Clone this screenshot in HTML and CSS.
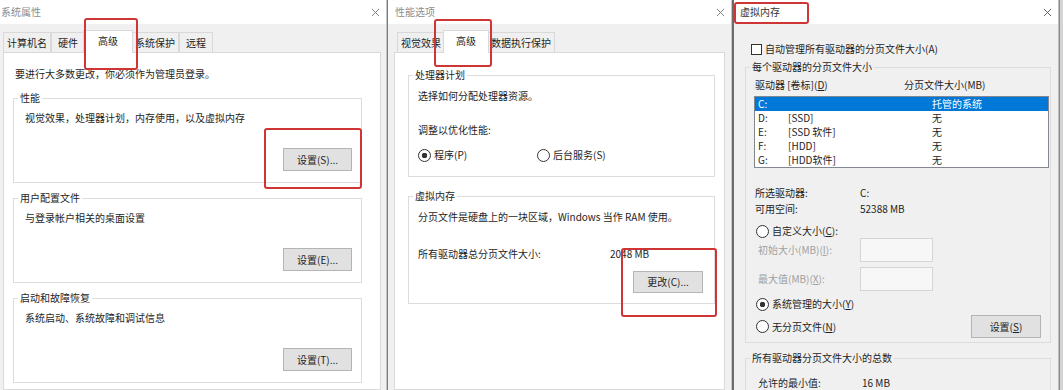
FILE: index.html
```html
<!DOCTYPE html>
<html>
<head>
	<meta charset="utf-8">
	<title>虚拟内存设置</title>
	<link rel="stylesheet" href="styles.css">
</head>
<body>
<div class="screen">

	<!-- 系统属性 -->
	<div class="dlg dlg-sys">
		<div class="titlebar">
			<span class="title">系统属性</span>
			<svg class="close" viewBox="0 0 10 10"><path d="M1 1L9 9M9 1L1 9" stroke="#777" stroke-width="1" fill="none"/></svg>
		</div>
		<div class="tabs tabs-sys">
			<span class="tab">计算机名</span>
			<span class="tab">硬件</span>
			<span class="tab on">高级</span>
			<span class="tab">系统保护</span>
			<span class="tab">远程</span>
		</div>
		<div class="page">
			<p class="note">要进行大多数更改，你必须作为管理员登录。</p>
			<fieldset class="group">
				<legend>性能</legend>
				<div class="group-in">
					<p>视觉效果，处理器计划，内存使用，以及虚拟内存</p>
					<div class="btn-row"><span class="btn">设置(S)...</span></div>
				</div>
			</fieldset>
			<fieldset class="group">
				<legend>用户配置文件</legend>
				<div class="group-in">
					<p>与登录帐户相关的桌面设置</p>
					<div class="btn-row"><span class="btn">设置(E)...</span></div>
				</div>
			</fieldset>
			<fieldset class="group">
				<legend>启动和故障恢复</legend>
				<div class="group-in">
					<p>系统启动、系统故障和调试信息</p>
					<div class="btn-row"><span class="btn">设置(T)...</span></div>
				</div>
			</fieldset>
		</div>
		<div class="mark mark-tab1"></div>
		<div class="mark mark-btn1"></div>
	</div>

	<!-- 性能选项 -->
	<div class="dlg dlg-perf">
		<div class="titlebar">
			<span class="title">性能选项</span>
			<svg class="close" viewBox="0 0 10 10"><path d="M1 1L9 9M9 1L1 9" stroke="#777" stroke-width="1" fill="none"/></svg>
		</div>
		<div class="tabs tabs-perf">
			<span class="tab">视觉效果</span>
			<span class="tab on">高级</span>
			<span class="tab">数据执行保护</span>
		</div>
		<div class="page">
			<fieldset class="group">
				<legend>处理器计划</legend>
				<div class="group-in">
					<p>选择如何分配处理器资源。</p>
					<p class="gap-20">调整以优化性能:</p>
					<div class="radio-pair">
						<span class="radio on"><span>程序(P)</span></span>
						<span class="radio"><span>后台服务(S)</span></span>
					</div>
				</div>
			</fieldset>
			<fieldset class="group">
				<legend>虚拟内存</legend>
				<div class="group-in">
					<p>分页文件是硬盘上的一块区域，Windows 当作 RAM 使用。</p>
					<div class="total-row">
						<span class="total-label">所有驱动器总分页文件大小:</span>
						<span>2048 MB</span>
					</div>
					<div class="btn-row"><span class="btn">更改(C)...</span></div>
				</div>
			</fieldset>
		</div>
		<div class="mark mark-tab2"></div>
		<div class="mark mark-btn2"></div>
	</div>

	<!-- 虚拟内存 -->
	<div class="dlg dlg-vm">
		<div class="titlebar">
			<span class="title">虚拟内存</span>
			<svg class="close" viewBox="0 0 10 10"><path d="M1 1L9 9M9 1L1 9" stroke="#555" stroke-width="1" fill="none"/></svg>
		</div>
		<div class="vm-body">
			<div class="check-row"><span class="check"></span><span>自动管理所有驱动器的分页文件大小(A)</span></div>

			<fieldset class="group">
				<legend>每个驱动器的分页文件大小</legend>
				<div class="group-in">
					<div class="list-head">
						<span class="head-drv">驱动器 [卷标](<u>D</u>)</span>
						<span>分页文件大小(MB)</span>
					</div>
					<div class="listbox">
						<div class="list-row sel"><span class="drv">C:</span><span class="lbl"></span><span>托管的系统</span></div>
						<div class="list-row"><span class="drv">D:</span><span class="lbl">[SSD]</span><span>无</span></div>
						<div class="list-row"><span class="drv">E:</span><span class="lbl">[SSD 软件]</span><span>无</span></div>
						<div class="list-row"><span class="drv">F:</span><span class="lbl">[HDD]</span><span>无</span></div>
						<div class="list-row"><span class="drv">G:</span><span class="lbl">[HDD软件]</span><span>无</span></div>
					</div>

					<div class="kv first"><span class="k">所选驱动器:</span><span>C:</span></div>
					<div class="kv"><span class="k">可用空间:</span><span>52388 MB</span></div>

					<div class="radio radio-custom"><span>自定义大小(<u>C</u>):</span></div>
					<div class="size-row"><span class="size-label">初始大小(MB)(<u>I</u>):</span><span class="field"></span></div>
					<div class="size-row"><span class="size-label">最大值(MB)(<u>X</u>):</span><span class="field"></span></div>

					<div class="radio on radio-sys"><span>系统管理的大小(<u>Y</u>)</span></div>
					<div class="last-row">
						<span class="radio"><span>无分页文件(<u>N</u>)</span></span>
						<span class="btn"><span>设置(<u>S</u>)</span></span>
					</div>
				</div>
			</fieldset>

			<fieldset class="group">
				<legend>所有驱动器分页文件大小的总数</legend>
				<div class="group-in">
					<div class="kv min-row"><span class="k">允许的最小值:</span><span>16 MB</span></div>
				</div>
			</fieldset>
		</div>
		<div class="mark mark-title3"></div>
	</div>

	<div class="edge"></div>
</div>
</body>
</html>
```

FILE: styles.css
```css
* {
	box-sizing: border-box;
}

body {
	margin: 0;
	font-family: "Noto Sans CJK SC", "Microsoft YaHei", sans-serif;
	font-size: 10px;
	line-height: 14px;
	color: #1e1e1e;
	background: #f0f0f0;
	overflow: hidden;
}

p {
	margin: 0;
}

u {
	text-decoration: underline;
}

.screen {
	display: flex;
	width: 1063px;
	height: 390px;
}

/* 窗口 */
.dlg {
	position: relative;
	display: flex;
	flex-direction: column;
	height: 390px;
	background: #f0f0f0;
}

.dlg-sys {
	width: 387px;
	border-right: 1px solid #c6c6c6;
}

.dlg-perf {
	width: 345px;
	border-left: 1px solid #7a7a7a;
	border-right: 1px solid #c6c6c6;
}

.dlg-vm {
	width: 327px;
	border-left: 2px solid #6b6b6b;
	border-right: 1px solid #bdbdbd;
}

.edge {
	flex: 1;
	background: #d4d4d4;
	border-left: 1px solid #8a8a8a;
}

.titlebar {
	display: flex;
	align-items: center;
	justify-content: space-between;
	flex: none;
	height: 24px;
	padding: 0 6px 0 7px;
	background: #fff;
}

.dlg-sys .titlebar {
	padding-left: 1px;
}

.dlg-vm .titlebar {
	padding-left: 6px;
}

.title {
	color: #8c8c8c;
}

.dlg-vm .title {
	color: #333;
}

.close {
	width: 9px;
	height: 9px;
}

/* 选项卡 */
.tabs {
	display: flex;
	align-items: flex-end;
	flex: none;
	height: 28px;
	padding-left: 3px;
}

.tabs-perf {
	padding-left: 9px;
}

.tab {
	min-width: 34px;
	height: 20px;
	padding: 0 3px;
	border: 1px solid #d9d9d9;
	border-bottom: none;
	text-align: center;
	line-height: 19px;
	background: #f0f0f0;
}

.tab.on {
	position: relative;
	z-index: 1;
	min-width: 46px;
	height: 23px;
	margin: 0 -2px -1px;
	line-height: 20px;
	background: #fff;
}

.tabs-sys .tab.on {
	min-width: 50px;
}

.page {
	flex: 1;
	background: #fff;
	border: 1px solid #d9d9d9;
}

.dlg-sys .page {
	margin: 0 5px 0 3px;
	padding: 14px 18px 0 9px;
}

.dlg-perf .page {
	margin: 0 6px;
	padding: 15px 9px 0 13px;
}

.note {
	margin: 0 0 10px 2px;
}

/* 分组框 */
.group {
	margin: 0;
	padding: 0;
	border: 1px solid #dcdcdc;
	min-width: 0;
}

.group legend {
	margin-left: 4px;
	padding: 0 2px;
	line-height: 14px;
}

.group + .group {
	margin-top: 8px;
}

.group-in {
	padding: 6px 9px 11px 11px;
}

.btn-row {
	display: flex;
	justify-content: flex-end;
	margin-top: 23px;
}

.btn {
	display: inline-flex;
	align-items: center;
	justify-content: center;
	width: 69px;
	height: 23px;
	background: #e1e1e1;
	border: 1px solid #b4b4b4;
}

/* 性能选项 */
.dlg-perf .group-in {
	padding: 7px 11px 14px 9px;
}

.dlg-perf .group + .group {
	margin-top: 12px;
}

.dlg-perf .group + .group .group-in {
	padding-bottom: 10px;
}

.gap-20 {
	margin-top: 20px;
}

.radio-pair {
	display: flex;
	margin-top: 11px;
}

.radio-pair .radio {
	width: 119px;
}

.radio {
	display: flex;
	align-items: center;
	gap: 3px;
	line-height: 14px;
}

.radio::before {
	content: "";
	flex: none;
	width: 11px;
	height: 11px;
	border: 1px solid #333;
	border-radius: 50%;
	background: #fff;
}

.radio.on::before {
	background: radial-gradient(circle, #333 0 2.5px, #fff 3px);
}

.total-row {
	display: flex;
	margin-top: 23px;
}

.total-label {
	width: 192px;
}

.dlg-perf .btn-row {
	margin-top: 10px;
}

.dlg-perf .btn {
	width: 70px;
	height: 22px;
}

/* 虚拟内存 */
.vm-body {
	flex: 1;
	padding: 18px 7px 0 11px;
}

.check-row {
	display: flex;
	align-items: center;
	gap: 3px;
	margin-left: 6px;
}

.check {
	width: 11px;
	height: 11px;
	border: 1px solid #333;
	background: #fff;
}

.vm-body .group {
	margin-top: 4px;
}

.vm-body .group + .group {
	margin-top: 8px;
}

.vm-body .group-in {
	padding: 4px 1px 4px 8px;
}

.list-head {
	display: flex;
	padding-left: 1px;
}

.head-drv {
	width: 149px;
}

.listbox {
	height: 72px;
	margin-top: 4px;
	background: #fff;
	border: 1px solid #828790;
}

.list-row {
	display: flex;
	height: 14px;
	padding-left: 3px;
}

.list-row.sel {
	background: #0078d7;
	color: #fff;
}

.drv {
	width: 30px;
}

.lbl {
	width: 144px;
}

.kv {
	display: flex;
	padding-left: 1px;
	line-height: 16px;
}

.kv.first {
	margin-top: 17px;
}

.k {
	width: 105px;
}

.radio-custom {
	margin-top: 7px;
	padding-left: 2px;
}

.size-row {
	display: flex;
	align-items: center;
	height: 24px;
}

.size-row + .size-row {
	margin-top: 5px;
}

.size-label {
	width: 106px;
	padding-left: 4px;
	color: #a0a0a0;
}

.field {
	width: 73px;
	height: 24px;
	background: #f7f7f7;
	border: 1px solid #d5d5d5;
}

.radio-sys {
	margin-top: 6px;
	padding-left: 2px;
}

.last-row {
	display: flex;
	align-items: center;
	justify-content: space-between;
	height: 23px;
	margin-top: 4px;
	padding-left: 2px;
}

.last-row .btn {
	width: 70px;
	margin-right: 8px;
}

.vm-body .group + .group .group-in {
	padding-top: 10px;
}

.min-row {
	padding-left: 4px;
}

.min-row .k {
	width: 104px;
}

/* 红色标注框 */
.mark {
	position: absolute;
	z-index: 2;
	border: 2px solid #cf3535;
	border-radius: 3px;
}

.mark-tab1 {
	left: 84px;
	top: 18px;
	width: 54px;
	height: 52px;
}

.mark-btn1 {
	left: 264px;
	top: 128px;
	width: 98px;
	height: 61px;
}

.mark-tab2 {
	left: 46px;
	top: 19px;
	width: 58px;
	height: 48px;
}

.mark-btn2 {
	left: 233px;
	top: 248px;
	width: 96px;
	height: 69px;
}

.mark-title3 {
	left: 0;
	top: 2px;
	width: 75px;
	height: 22px;
}
```
